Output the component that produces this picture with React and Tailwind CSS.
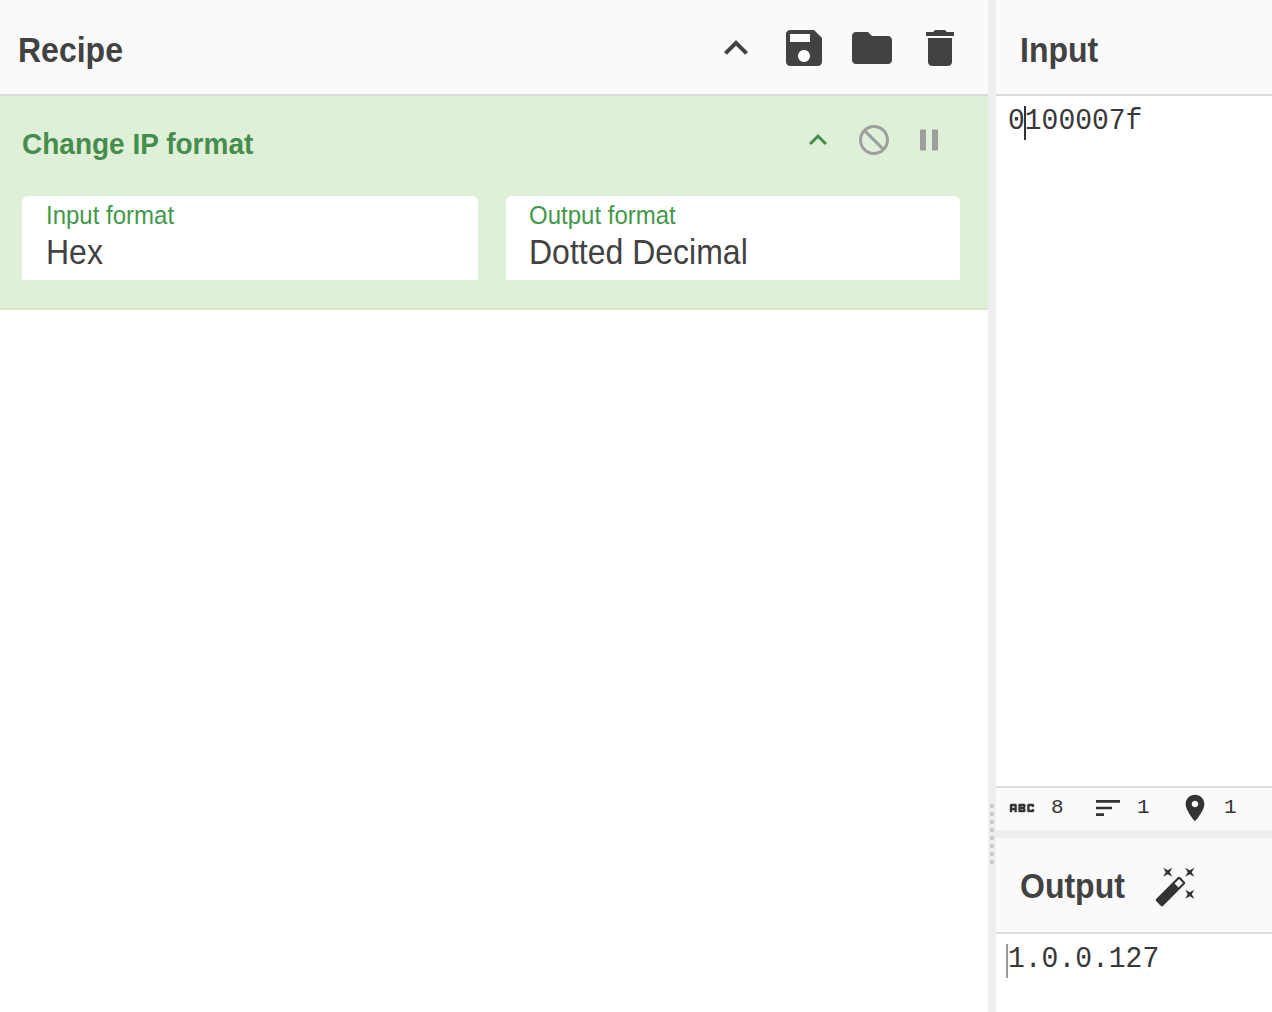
const paths = {
  up: 'M7.41 15.41L12 10.83l4.59 4.58L18 14l-6-6-6 6z',
  save: 'M17 3H5c-1.11 0-2 .9-2 2v14c0 1.1.89 2 2 2h14c1.1 0 2-.9 2-2V7l-4-4zm-5 16c-1.66 0-3-1.34-3-3s1.34-3 3-3 3 1.34 3 3-1.34 3-3 3zm3-10H5V5h10v4z',
  folder: 'M10 4H4c-1.1 0-1.99.9-1.99 2L2 18c0 1.1.9 2 2 2h16c1.1 0 2-.9 2-2V8c0-1.1-.9-2-2-2h-8l-2-2z',
  trash: 'M6 19c0 1.1.9 2 2 2h8c1.1 0 2-.9 2-2V7H6v12zM19 4h-3.5l-1-1h-5l-1 1H5v2h14V4z',
  ban: 'M12 2C6.48 2 2 6.48 2 12s4.48 10 10 10 10-4.48 10-10S17.52 2 12 2zm0 18c-4.42 0-8-3.58-8-8 0-1.85.63-3.55 1.69-4.9L16.9 18.31C15.55 19.37 13.85 20 12 20zm6.31-3.1L7.1 5.69C8.45 4.63 10.15 4 12 4c4.42 0 8 3.58 8 8 0 1.85-.63 3.55-1.69 4.9z',
  pause: 'M6 19h4V5H6v14zm8-14v14h4V5h-4z',
  abc: 'M21 11h-1.5v-.5h-2v3h2V13H21v1c0 .55-.45 1-1 1h-3c-.55 0-1-.45-1-1v-4c0-.55.45-1 1-1h3c.55 0 1 .45 1 1v1zM8 10v5H6.5v-1.5h-2V15H3v-5c0-.55.45-1 1-1h3c.55 0 1 .45 1 1zm-1.5.5h-2V12h2v-1.5zm7 1.5c.55 0 1 .45 1 1v1c0 .55-.45 1-1 1h-4V9h4c.55 0 1 .45 1 1v1c0 .55-.45 1-1 1zM11 10.5v.75h2v-.75h-2zm2 2.25h-2v.75h2v-.75z',
  sort: 'M3 18h6v-2H3v2zM3 6v2h18V6H3zm0 7h12v-2H3v2z',
  place: 'M12 2C8.13 2 5 5.13 5 9c0 5.25 7 13 7 13s7-7.75 7-13c0-3.87-3.13-7-7-7zm0 9.5c-1.38 0-2.5-1.12-2.5-2.5s1.12-2.5 2.5-2.5 2.5 1.12 2.5 2.5-1.12 2.5-2.5 2.5z',
  wand: 'M7.5 5.6L10 7 8.6 4.5 10 2 7.5 3.4 5 2l1.4 2.5L5 7zm12 9.8L17 14l1.4 2.5L17 19l2.5-1.4L22 19l-1.4-2.5L22 14zM22 2l-2.5 1.4L17 2l1.4 2.5L17 7l2.5-1.4L22 7l-1.4-2.5zm-7.63 5.29c-.39-.39-1.02-.39-1.41 0L1.29 18.96c-.39.39-.39 1.02 0 1.41l2.34 2.34c.39.39 1.02.39 1.41 0L16.7 11.05c.39-.39.39-1.02 0-1.41l-2.33-2.35zm-1.03 5.49l-2.12-2.12 2.44-2.44 2.12 2.12-2.44 2.44z',
};

function Icon({ name, className }) {
  return (
    <svg viewBox="0 0 24 24" fill="currentColor" className={`shrink-0 ${className}`} aria-hidden="true">
      <path d={paths[name]} />
    </svg>
  );
}

function PaneTitle({ children, className }) {
  return (
    <h1 className={`origin-[0_29px] scale-y-[1.08] text-[32px] leading-9 font-bold ${className}`}>{children}</h1>
  );
}

function Argument({ label, value, className }) {
  return (
    <div className={`flex h-[84px] flex-col rounded-t-md bg-white pt-[5px] ${className}`}>
      <label className="origin-[0_24px] scale-y-[1.06] text-2xl leading-[30px] text-[#43984a]">{label}</label>
      <span className="origin-[0_33px] scale-y-[1.08] text-[32px] leading-[44px] text-[#424242]">{value}</span>
    </div>
  );
}

function Stat({ icon, value, className, iconClassName }) {
  return (
    <div className={`flex h-8 items-center ${className}`}>
      <Icon name={icon} className={`size-8 ${iconClassName}`} />
      <span className="ml-[13px] font-['Liberation_Mono',monospace] text-[21px] leading-8">{value}</span>
    </div>
  );
}

function EditorLine({ children }) {
  return (
    <div className="origin-[0_25px] scale-y-[1.08] font-['Liberation_Mono',monospace] text-[28px] leading-[34px] text-[#383838]">
      {children}
    </div>
  );
}

function Recipe() {
  return (
    <section className="flex w-[988px] flex-col">
      <header className="flex h-24 items-start border-b-2 border-[#ddd] bg-[#fafafa] pt-6 pr-6 pl-[18px] text-[#424242]">
        <PaneTitle className="mt-[9px]">Recipe</PaneTitle>
        <div className="ml-auto flex gap-5">
          <Icon name="up" className="size-12" />
          <Icon name="save" className="size-12" />
          <Icon name="folder" className="size-12" />
          <Icon name="trash" className="size-12" />
        </div>
      </header>
      <article className="h-[214px] border-b-2 border-[#d6e9c6] bg-[#dff0d8] px-[22px] pt-[26px]">
        <div className="flex h-[74px] items-start">
          <h2 className="mt-[5px] origin-[0_27px] scale-y-[1.06] text-[28px] leading-9 font-bold text-[#468c4c]">
            Change IP format
          </h2>
          <div className="mr-[19px] ml-auto flex text-[#9e9e9e]">
            <Icon name="up" className="size-9 text-[#468c4c]" />
            <Icon name="ban" className="ml-5 size-9" />
            <Icon name="pause" className="ml-[19px] size-9" />
          </div>
        </div>
        <div className="flex gap-7">
          <Argument label="Input format" value="Hex" className="w-[456px] pl-6" />
          <Argument label="Output format" value="Dotted Decimal" className="w-[454px] pl-[23px]" />
        </div>
      </article>
    </section>
  );
}

function Gutter() {
  return (
    <div className="flex w-2 flex-col items-center gap-1 bg-[#eee] pt-[804px]">
      {Array.from({ length: 8 }, (_, i) => (
        <span key={i} className="size-1 shrink-0 bg-[#ccc]" />
      ))}
    </div>
  );
}

export default function App() {
  return (
    <main className="flex h-[1012px] w-[1272px] overflow-hidden bg-white font-['Liberation_Sans',sans-serif]">
      <Recipe />
      <Gutter />
      <div className="flex min-w-0 flex-1 flex-col">
        <header className="h-24 border-b-2 border-[#ddd] bg-[#fafafa] pt-[33px] pl-6 text-[#424242]">
          <PaneTitle className="">Input</PaneTitle>
        </header>
        <div className="relative h-[690px] pt-[9px] pl-3">
          <EditorLine>0100007f</EditorLine>
          <span className="absolute top-2.5 left-7 h-[34px] w-0.5 bg-[#333]" />
        </div>
        <div className="flex h-11 border-t-2 border-[#ddd] bg-[#fafafa] pt-1 pl-2.5 text-[#333]">
          <Stat icon="abc" value="8" className="w-[86px]" iconClassName="stroke-current stroke-[0.35]" />
          <Stat icon="sort" value="1" className="w-[87px]" iconClassName="" />
          <Stat icon="place" value="1" className="" iconClassName="mb-px" />
        </div>
        <div className="h-2 bg-[#eee]" />
        <header className="flex h-24 items-start border-b-2 border-[#ddd] bg-[#fafafa] pl-6 text-[#424242]">
          <PaneTitle className="mt-[31px]">Output</PaneTitle>
          <Icon name="wand" className="mt-[26px] ml-[29px] size-11 text-[#333]" />
        </header>
        <div className="relative flex-1 pt-[9px] pl-3">
          <EditorLine>1.0.0.127</EditorLine>
          <span className="absolute top-2.5 left-2.5 h-[34px] w-0.5 bg-[#999]" />
        </div>
      </div>
    </main>
  );
}
